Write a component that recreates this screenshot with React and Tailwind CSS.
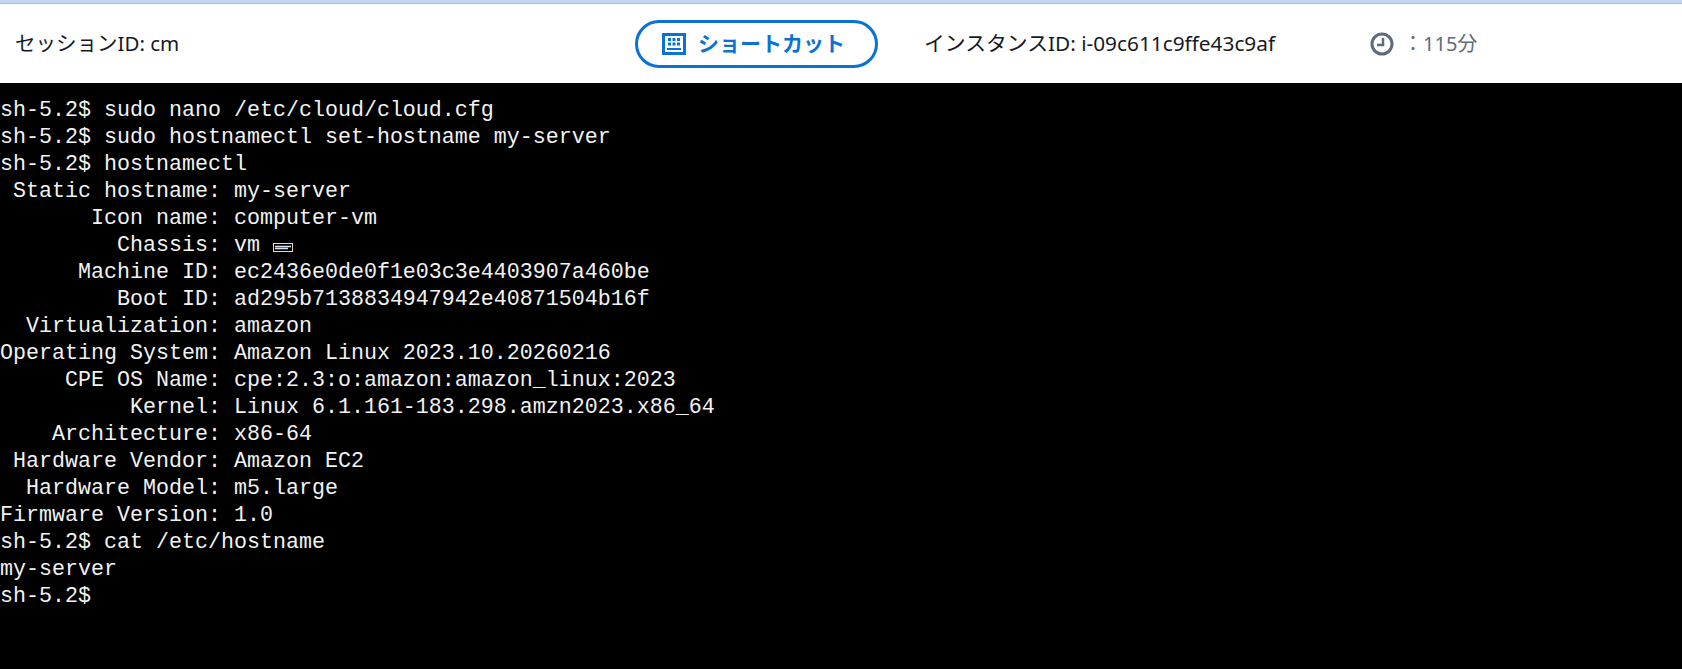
import React from 'react';

const lines = [
  'sh-5.2$ sudo nano /etc/cloud/cloud.cfg',
  'sh-5.2$ sudo hostnamectl set-hostname my-server',
  'sh-5.2$ hostnamectl',
  ' Static hostname: my-server',
  '       Icon name: computer-vm',
  '         Chassis: vm ',
  '      Machine ID: ec2436e0de0f1e03c3e4403907a460be',
  '         Boot ID: ad295b7138834947942e40871504b16f',
  '  Virtualization: amazon',
  'Operating System: Amazon Linux 2023.10.20260216',
  '     CPE OS Name: cpe:2.3:o:amazon:amazon_linux:2023',
  '          Kernel: Linux 6.1.161-183.298.amzn2023.x86_64',
  '    Architecture: x86-64',
  ' Hardware Vendor: Amazon EC2',
  '  Hardware Model: m5.large',
  'Firmware Version: 1.0',
  'sh-5.2$ cat /etc/hostname',
  'my-server',
  'sh-5.2$',
];

const KeyboardIcon = () => (
  <svg width="24" height="22" viewBox="0 0 24 22" fill="#0972d3">
    <path fillRule="evenodd" d="M0 0h24v22H0zM3 3v16h18V3z" />
    <path d="M6 5h3v3H6zM10.5 5h3v3h-3zM15 5h3v3h-3zM6 9.5h3v3H6zM10.5 9.5h3v3h-3zM15 9.5h3v3h-3zM5 15h14v2H5z" />
  </svg>
);

const ClockIcon = () => (
  <svg width="24" height="24" viewBox="0 0 24 24" fill="none" stroke="#5f6b7a" strokeWidth="3">
    <circle cx="12" cy="12" r="10" />
    <path d="M13 6v7H7" strokeWidth="2.5" />
  </svg>
);

// the drive glyph systemd prints after the chassis name
const DriveGlyph = () => (
  <svg width="20" height="9" viewBox="0 0 20 9" className="inline-block align-[-1px]" fill="none">
    <rect x="0.5" y="0.5" width="19" height="8" stroke="#f0d9a8" />
    <path d="M2 3.5h16M2 5.5h13" stroke="#d5e4f2" strokeWidth="1.4" />
  </svg>
);

export default function App() {
  return (
    <div className="w-[1682px] h-[669px] bg-black overflow-hidden flex flex-col">
      <div className="h-[4px] bg-[#c5d6f0] border-b border-[#a9bcdc]" />
      <header
        className="h-[79px] bg-white flex items-center text-[20.5px] text-[#16191f]"
        style={{ fontFamily: '"Noto Sans", "Noto Sans CJK JP", sans-serif' }}
      >
        <div className="w-[635px] pl-[15px]">セッションID: cm</div>
        <button className="w-[243px] h-[48px] pr-[6px] rounded-full border-[3px] border-[#0972d3] flex items-center justify-center gap-[12px] text-[#0972d3] text-[21px] font-bold">
          <KeyboardIcon />
          <span>ショートカット</span>
        </button>
        <div className="w-[492px] pl-[46px] text-[20.8px]">インスタンスID: i-09c611c9ffe43c9af</div>
        <div className="flex items-center gap-[9px] text-[#5f6b7a] text-[20px]">
          <ClockIcon />
          <span>：115分</span>
        </div>
      </header>
      <pre
        className="flex-1 bg-black text-[#f2f2f2] text-[21.67px] leading-[27px] pt-[14px]"
        style={{ fontFamily: '"Liberation Mono", monospace' }}
      >
        {lines.map((line, i) => (
          <div key={i} className="h-[27px]">
            {line}
            {i === 5 && <DriveGlyph />}
          </div>
        ))}
      </pre>
    </div>
  );
}
